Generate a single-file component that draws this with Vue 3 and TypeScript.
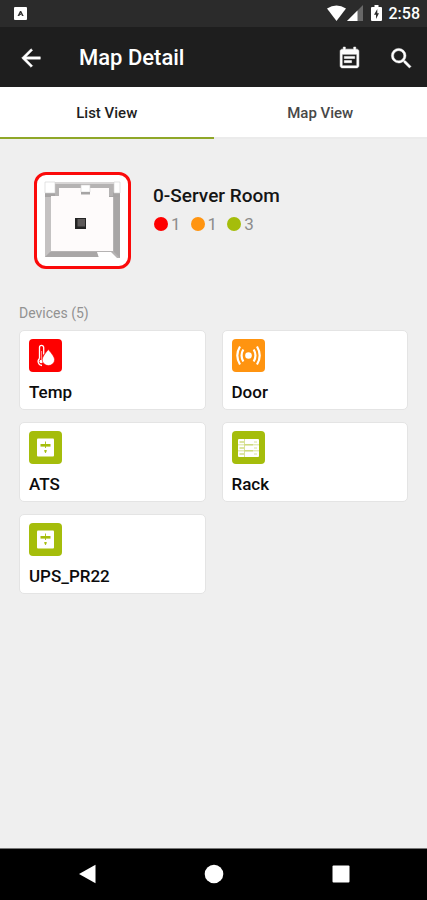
<script setup lang="ts">
import { ref } from 'vue'

type DeviceIcon = 'temp' | 'door' | 'unit' | 'rack'

interface Device {
  name: string
  icon: DeviceIcon
  level: 'critical' | 'warning' | 'normal'
}

const tabs = ['List View', 'Map View']
const activeTab = ref(0)

const counts = [
  { level: 'critical', value: 1 },
  { level: 'warning', value: 1 },
  { level: 'normal', value: 3 },
]

const devices: Device[] = [
  { name: 'Temp', icon: 'temp', level: 'critical' },
  { name: 'Door', icon: 'door', level: 'warning' },
  { name: 'ATS', icon: 'unit', level: 'normal' },
  { name: 'Rack', icon: 'rack', level: 'normal' },
  { name: 'UPS_PR22', icon: 'unit', level: 'normal' },
]
</script>

<template>
  <div class="screen">
    <div class="status-bar">
      <svg class="notice" width="13" height="13" viewBox="0 0 13 13" aria-hidden="true">
        <rect width="13" height="13" rx="1" fill="#fff" />
        <path d="M3.500 9 6 4H7.200L9.700 9H8L6.600 6 5.400 9Z" fill="#333" />
        <path d="M5 7.400H7" stroke="#333" stroke-width="1" />
      </svg>
      <div class="status-icons">
        <svg width="19" height="17" viewBox="0 0 19 17" aria-hidden="true">
          <path d="M0 3.600Q9.500-2.600 19 3.600L9.500 16Z" fill="#fff" />
        </svg>
        <svg width="16" height="17" viewBox="0 0 16 17" aria-hidden="true">
          <path d="M0 16 16 0V16Z" fill="#686868" />
          <path d="M0 16 10.500 5.500V16Z" fill="#fff" />
        </svg>
        <svg class="battery" width="11" height="17" viewBox="0 0 11 17" aria-hidden="true">
          <path d="M3.500 0h4v2H10a1 1 0 0 1 1 1v12a1 1 0 0 1-1 1H1a1 1 0 0 1-1-1V3a1 1 0 0 1 1-1h2.500Z" fill="#fff" />
          <path d="M6.300 4 3 9.700H5V14L8 8.300H6.300Z" fill="#2b2b2b" />
        </svg>
        <span class="clock">2:58</span>
      </div>
    </div>

    <header class="app-bar">
      <button class="icon-button" type="button" aria-label="Back">
        <svg width="28" height="28" viewBox="0 0 24 24" aria-hidden="true">
          <path d="M20 11H7.830l5.590-5.590L12 4l-8 8 8 8 1.410-1.410L7.830 13H20v-2z" fill="#fff" stroke="#fff" stroke-width=".4" />
        </svg>
      </button>
      <h1>Map Detail</h1>
      <button class="icon-button" type="button" aria-label="Events">
        <svg width="25" height="25" viewBox="0 0 24 24" aria-hidden="true">
          <path d="M17 10H7v2h10v-2zm2-7h-1V1h-2v2H8V1H6v2H5c-1.110 0-1.990.9-1.990 2L3 19c0 1.100.89 2 2 2h14c1.100 0 2-.9 2-2V5c0-1.100-.9-2-2-2zm0 16H5V8h14v11zm-5-5H7v2h7v-2z" fill="#fff" stroke="#fff" stroke-width=".5" />
        </svg>
      </button>
      <button class="icon-button" type="button" aria-label="Search">
        <svg width="27" height="27" viewBox="0 0 24 24" aria-hidden="true">
          <path d="M15.500 14h-.790l-.280-.270A6.471 6.471 0 0 0 16 9.500 6.500 6.500 0 1 0 9.500 16c1.610 0 3.090-.590 4.230-1.570l.270.280v.790l5 4.990L20.490 19l-4.990-5zm-6 0C7.010 14 5 11.990 5 9.500S7.010 5 9.500 5 14 7.010 14 9.500 11.990 14 9.500 14z" fill="#fff" stroke="#fff" stroke-width=".4" />
        </svg>
      </button>
    </header>

    <nav class="tabs" role="tablist">
      <button
        v-for="(tab, i) in tabs"
        :key="tab"
        type="button"
        role="tab"
        class="tab"
        :class="{ active: i === activeTab }"
        :aria-selected="i === activeTab"
        @click="activeTab = i"
      >
        {{ tab }}
      </button>
    </nav>

    <main class="content">
      <section class="room">
        <div class="plan">
          <svg width="77" height="79" viewBox="0 0 77 79" aria-hidden="true">
            <path d="M1 1H76V77H70L52 71H1Z" fill="#b5b3b3" />
            <path d="M1 1H76V3H1Z" fill="#d8d6d6" />
            <path d="M1 71H54L57 76H1Z" fill="#a9a7a7" />
            <path d="M1 76 7 70V14H1Z" fill="#c4c2c2" />
            <path d="M70 14H76V77L70 71Z" fill="#a8a6a6" />
            <path d="M7 7H69V70H7Z" fill="#fefbfb" />
            <path d="M1 11H14V15H7V16H1ZM65 11H76V16H65Z" fill="#a6a4a4" />
            <path d="M11 7H15V15H11ZM65 7H69V15H65Z" fill="#b5b3b3" />
            <path d="M1 1H11V12H1ZM70 1H76V12H70ZM37 4H46V11H37Z" fill="#fff" stroke="#d2d0d0" stroke-width=".6" />
            <path d="M37 11H46V13.500H37Z" fill="#a6a4a4" />
            <path d="M53 71H67L73 77H55Z" fill="#fff" />
            <rect x="31" y="37" width="11" height="11" fill="#242424" />
            <rect x="33.500" y="38" width="7.500" height="7.500" fill="#5d5959" />
          </svg>
        </div>
        <div class="room-info">
          <h2>0-Server Room</h2>
          <ul class="counts">
            <li v-for="c in counts" :key="c.level">
              <span class="dot" :class="c.level"></span>{{ c.value }}
            </li>
          </ul>
        </div>
      </section>

      <h3>Devices ({{ devices.length }})</h3>
      <div class="grid">
        <button v-for="d in devices" :key="d.name" type="button" class="card">
          <span class="badge" :class="d.level">
            <svg width="33" height="33" viewBox="0 0 33 33" aria-hidden="true">
              <g v-if="d.icon === 'temp'">
                <path d="M10.500 19.500V8.500a2.100 2.100 0 0 1 4.200 0v7M10.500 19.500a4 4 0 0 0 2.500 7" fill="none" stroke="#fff" stroke-width="1.300" />
                <path d="M12.600 12v9" stroke="#fff" stroke-opacity=".6" stroke-width="1" />
                <circle cx="12.200" cy="22.500" r="1.800" fill="#fff" />
                <path d="M19.300 10.500Q25.600 17.500 25.600 20.700a6.200 5.900 0 0 1-12.400 0Q13.200 17.500 19.300 10.500Z" fill="#fff" stroke="#fe0000" stroke-width=".6" />
              </g>
              <g v-else-if="d.icon === 'door'" fill="none" stroke="#fff" stroke-width="2.200">
                <circle cx="16.500" cy="16.500" r="3.300" fill="#fff" stroke="none" />
                <path d="M11.300 10.500Q7.800 16.500 11.300 22.500M21.700 10.500Q25.200 16.500 21.700 22.500" />
                <path d="M8 7.500Q2.600 16.500 8 25.500M25 7.500Q30.400 16.500 25 25.500" />
              </g>
              <g v-else-if="d.icon === 'unit'">
                <rect x="8" y="7.500" width="17" height="18" rx="1" fill="#fff" />
                <path d="M11.500 14.300H21.500" stroke="#a5bd0b" stroke-width="2.600" />
                <path d="M16.500 10.500V17M15.600 19.500H17.400L16.500 21.800Z" stroke="#a5bd0b" stroke-width=".9" fill="#a5bd0b" />
              </g>
              <g v-else>
                <rect x="6" y="8" width="21" height="18" rx="1" fill="#fff" />
                <path d="M12.500 13.800H21M12.500 19.800H21M7.500 11H12M7.500 17H12M7.500 23H12" stroke="#b9cb45" stroke-width="1" />
                <path d="M6 13.800H27M6 19.800H27M12.500 8V26M22 11H25M22 17H25M22 23H25" stroke="#cfdb80" stroke-width=".8" />
              </g>
            </svg>
          </span>
          <span class="name">{{ d.name }}</span>
        </button>
      </div>
    </main>

    <footer class="system-nav">
      <button type="button" aria-label="System back">
        <svg width="20" height="20" viewBox="0 0 20 20" aria-hidden="true">
          <path d="M18.500.8V19.200L2 10Z" fill="#fff" />
        </svg>
      </button>
      <button type="button" aria-label="Home">
        <svg width="20" height="20" viewBox="0 0 20 20" aria-hidden="true">
          <circle cx="10" cy="10" r="9.300" fill="#fff" />
        </svg>
      </button>
      <button type="button" aria-label="Overview">
        <svg width="20" height="20" viewBox="0 0 20 20" aria-hidden="true">
          <rect x="1.500" y="1.500" width="17" height="17" rx="1" fill="#fff" />
        </svg>
      </button>
    </footer>
  </div>
</template>

<style>
body {
  background: #efefef;
}
</style>

<style scoped>
.screen {
  display: flex;
  flex-direction: column;
  min-height: 100vh;
  background: #efefef;
  color: #1a1a1a;
  font-family: Roboto, "Liberation Sans", sans-serif;
}

h1,
h2,
h3,
ul {
  margin: 0;
  padding: 0;
}

button {
  margin: 0;
  padding: 0;
  border: 0;
  background: none;
  color: inherit;
  font: inherit;
  cursor: pointer;
}

svg {
  display: block;
}

.status-bar {
  display: flex;
  align-items: center;
  justify-content: space-between;
  box-sizing: border-box;
  height: 27px;
  padding: 0 7px 0 14px;
  background: #2b2b2b;
}

.status-icons {
  display: flex;
  align-items: center;
  gap: 1px;
  color: #fff;
}

.battery {
  margin: 0 6px 0 7px;
}

.clock {
  font-size: 16px;
  line-height: 20px;
  font-weight: 500;
}

.app-bar {
  display: flex;
  align-items: center;
  gap: 12px;
  box-sizing: border-box;
  height: 60px;
  padding: 2px 6px 0 11px;
  background: #1e1e1e;
}

.app-bar h1 {
  flex: 1;
  padding-left: 16px;
  color: #fff;
  font-size: 22px;
  line-height: 28px;
  font-weight: 500;
}

.icon-button {
  display: grid;
  place-items: center;
  width: 40px;
  height: 40px;
}

.tabs {
  display: flex;
  background: #fff;
}

.tab {
  flex: 1;
  box-sizing: border-box;
  height: 52px;
  padding-top: 2px;
  border-bottom: 2px solid #ebebeb;
  color: #484848;
  font-size: 15px;
  line-height: 20px;
  font-weight: 500;
}

.tab.active {
  border-bottom-color: #8fa728;
  color: #1e1e1e;
}

.content {
  flex: 1;
  padding: 33px 19px;
}

.room {
  display: flex;
  gap: 22px;
  padding-left: 15px;
}

.plan {
  display: grid;
  place-items: center;
  box-sizing: border-box;
  width: 97px;
  height: 97px;
  border: 3px solid #fb0a0a;
  border-radius: 12px;
  background: #fff;
}

.room-info {
  padding-top: 12px;
}

h2 {
  color: #151515;
  font-size: 19px;
  line-height: 24px;
  font-weight: 500;
}

.counts {
  display: flex;
  gap: 10px;
  padding: 5px 0 0 1px;
  list-style: none;
  color: #8c8c8c;
  font-size: 17px;
  line-height: 22px;
}

.counts li {
  display: flex;
  align-items: center;
  gap: 3px;
}

.dot {
  width: 14px;
  height: 14px;
  border-radius: 50%;
}

.critical {
  background: #fe0000;
}

.warning {
  background: #ff9410;
}

.normal {
  background: #a5bd0b;
}

h3 {
  padding: 34px 0 7px;
  color: #929292;
  font-size: 14px;
  line-height: 20px;
  font-weight: 400;
}

.grid {
  display: grid;
  grid-template-columns: 1fr 1fr;
  gap: 12px 16px;
}

.card {
  display: flex;
  flex-direction: column;
  align-items: flex-start;
  gap: 9px;
  box-sizing: border-box;
  height: 80px;
  padding: 8px 9px 6px;
  border: 1px solid #e4e4e4;
  border-radius: 5px;
  background: #fff;
}

.badge {
  border-radius: 4px;
}

.name {
  color: #0c0c0c;
  font-size: 17px;
  line-height: 22px;
  font-weight: 500;
}

.system-nav {
  display: flex;
  align-items: center;
  justify-content: center;
  gap: 87px;
  height: 52px;
  background: #000;
  box-shadow: inset 0 1px #777;
}

.system-nav button {
  display: grid;
  place-items: center;
  width: 40px;
  height: 40px;
}
</style>
